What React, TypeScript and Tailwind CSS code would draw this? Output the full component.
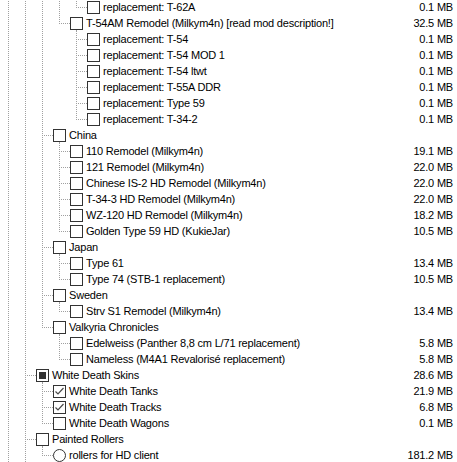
import type { ReactNode } from 'react';

type Mark = 'none' | 'checked' | 'partial' | 'radio';

type Row = {
  // one char per tree column: '|' guide, ' ' empty, 'T' branch, 'L' last branch
  guides: string;
  label: string;
  size?: string;
  mark?: Mark;
  kids?: boolean;
};

const rows: Row[] = [
  { guides: '||||L', label: 'replacement: T-62A', size: '0.1 MB' },
  { guides: '|||L', label: 'T-54AM Remodel (Milkym4n) [read mod description!]', size: '32.5 MB', kids: true },
  { guides: '||| T', label: 'replacement: T-54', size: '0.1 MB' },
  { guides: '||| T', label: 'replacement: T-54 MOD 1', size: '0.1 MB' },
  { guides: '||| T', label: 'replacement: T-54 ltwt', size: '0.1 MB' },
  { guides: '||| T', label: 'replacement: T-55A DDR', size: '0.1 MB' },
  { guides: '||| T', label: 'replacement: Type 59', size: '0.1 MB' },
  { guides: '||| L', label: 'replacement: T-34-2', size: '0.1 MB' },
  { guides: '||T', label: 'China', kids: true },
  { guides: '|||T', label: '110 Remodel (Milkym4n)', size: '19.1 MB' },
  { guides: '|||T', label: '121 Remodel (Milkym4n)', size: '22.0 MB' },
  { guides: '|||T', label: 'Chinese IS-2 HD Remodel (Milkym4n)', size: '22.0 MB' },
  { guides: '|||T', label: 'T-34-3 HD Remodel (Milkym4n)', size: '22.0 MB' },
  { guides: '|||T', label: 'WZ-120 HD Remodel (Milkym4n)', size: '18.2 MB' },
  { guides: '|||L', label: 'Golden Type 59 HD (KukieJar)', size: '10.5 MB' },
  { guides: '||T', label: 'Japan', kids: true },
  { guides: '|||T', label: 'Type 61', size: '13.4 MB' },
  { guides: '|||L', label: 'Type 74 (STB-1 replacement)', size: '10.5 MB' },
  { guides: '||T', label: 'Sweden', kids: true },
  { guides: '|||L', label: 'Strv S1 Remodel (Milkym4n)', size: '13.4 MB' },
  { guides: '||L', label: 'Valkyria Chronicles', kids: true },
  { guides: '|| T', label: 'Edelweiss (Panther 8,8 cm L/71 replacement)', size: '5.8 MB' },
  { guides: '|| L', label: 'Nameless (M4A1 Revalorisé replacement)', size: '5.8 MB' },
  { guides: '|T', label: 'White Death Skins', size: '28.6 MB', mark: 'partial', kids: true },
  { guides: '||T', label: 'White Death Tanks', size: '21.9 MB', mark: 'checked' },
  { guides: '||T', label: 'White Death Tracks', size: '6.8 MB', mark: 'checked' },
  { guides: '||L', label: 'White Death Wagons', size: '0.1 MB' },
  { guides: '|T', label: 'Painted Rollers', kids: true },
  { guides: '||L', label: 'rollers for HD client', size: '181.2 MB', mark: 'radio' },
];

const DOT = '#a0a0a0';
const INK = '#333333';

// dotted tree guides to the left of the checkbox
function TreeLines({ guides }: { guides: string }) {
  const width = guides.length * 17 + 2;
  const parts: ReactNode[] = [];
  guides.split('').forEach((c, i) => {
    const x = i * 17 + 8.5;
    if (c === '|' || c === 'T') {
      parts.push(<line key={`v${i}`} x1={x} y1={0} x2={x} y2={16} />);
    }
    if (c === 'L') {
      parts.push(<line key={`v${i}`} x1={x} y1={0} x2={x} y2={9} />);
    }
    if (c === 'T' || c === 'L') {
      parts.push(<line key={`h${i}`} x1={x + 1.5} y1={8.5} x2={i * 17 + 19} y2={8.5} />);
    }
  });
  return (
    <svg width={width} height={16} className="shrink-0" shapeRendering="crispEdges">
      <g stroke={DOT} strokeWidth={1} strokeDasharray="1 1">
        {parts}
      </g>
    </svg>
  );
}

function CheckMark({ mark, kids }: { mark: Mark; kids?: boolean }) {
  return (
    <svg width={13} height={16} className="shrink-0">
      {kids ? (
        <line x1={6.5} y1={15} x2={6.5} y2={16} stroke={DOT} strokeWidth={1} shapeRendering="crispEdges" />
      ) : null}
      {mark === 'radio' ? (
        <circle cx={6.5} cy={8.5} r={6} fill="#fff" stroke={INK} strokeWidth={1} />
      ) : (
        <rect x={0.5} y={2.5} width={12} height={12} fill="#fff" stroke={INK} strokeWidth={1} shapeRendering="crispEdges" />
      )}
      {mark === 'partial' ? <rect x={3} y={5} width={7} height={7} fill={INK} shapeRendering="crispEdges" /> : null}
      {mark === 'checked' ? (
        <path d="M2.5 8.5 L5 11 L10.5 5" fill="none" stroke="#4a4a4a" strokeWidth={1.2} />
      ) : null}
    </svg>
  );
}

function ComponentRow({ row }: { row: Row }) {
  return (
    <div className="flex h-4 items-center">
      <TreeLines guides={row.guides} />
      <CheckMark mark={row.mark ?? 'none'} kids={row.kids} />
      <span className="ml-[3px] whitespace-nowrap">{row.label}</span>
      {row.size ? <span className="ml-auto whitespace-nowrap pr-[4px]">{row.size}</span> : null}
    </div>
  );
}

export default function App() {
  return (
    <div
      className="h-[462px] w-[457px] overflow-hidden bg-white text-[11px] leading-4 tracking-[-0.2px] text-black"
      style={{ fontFamily: '"Liberation Sans", Arial, sans-serif' }}
    >
      <div className="-mt-px flex flex-col">
        {rows.map((row) => (
          <ComponentRow key={row.label} row={row} />
        ))}
      </div>
    </div>
  );
}
